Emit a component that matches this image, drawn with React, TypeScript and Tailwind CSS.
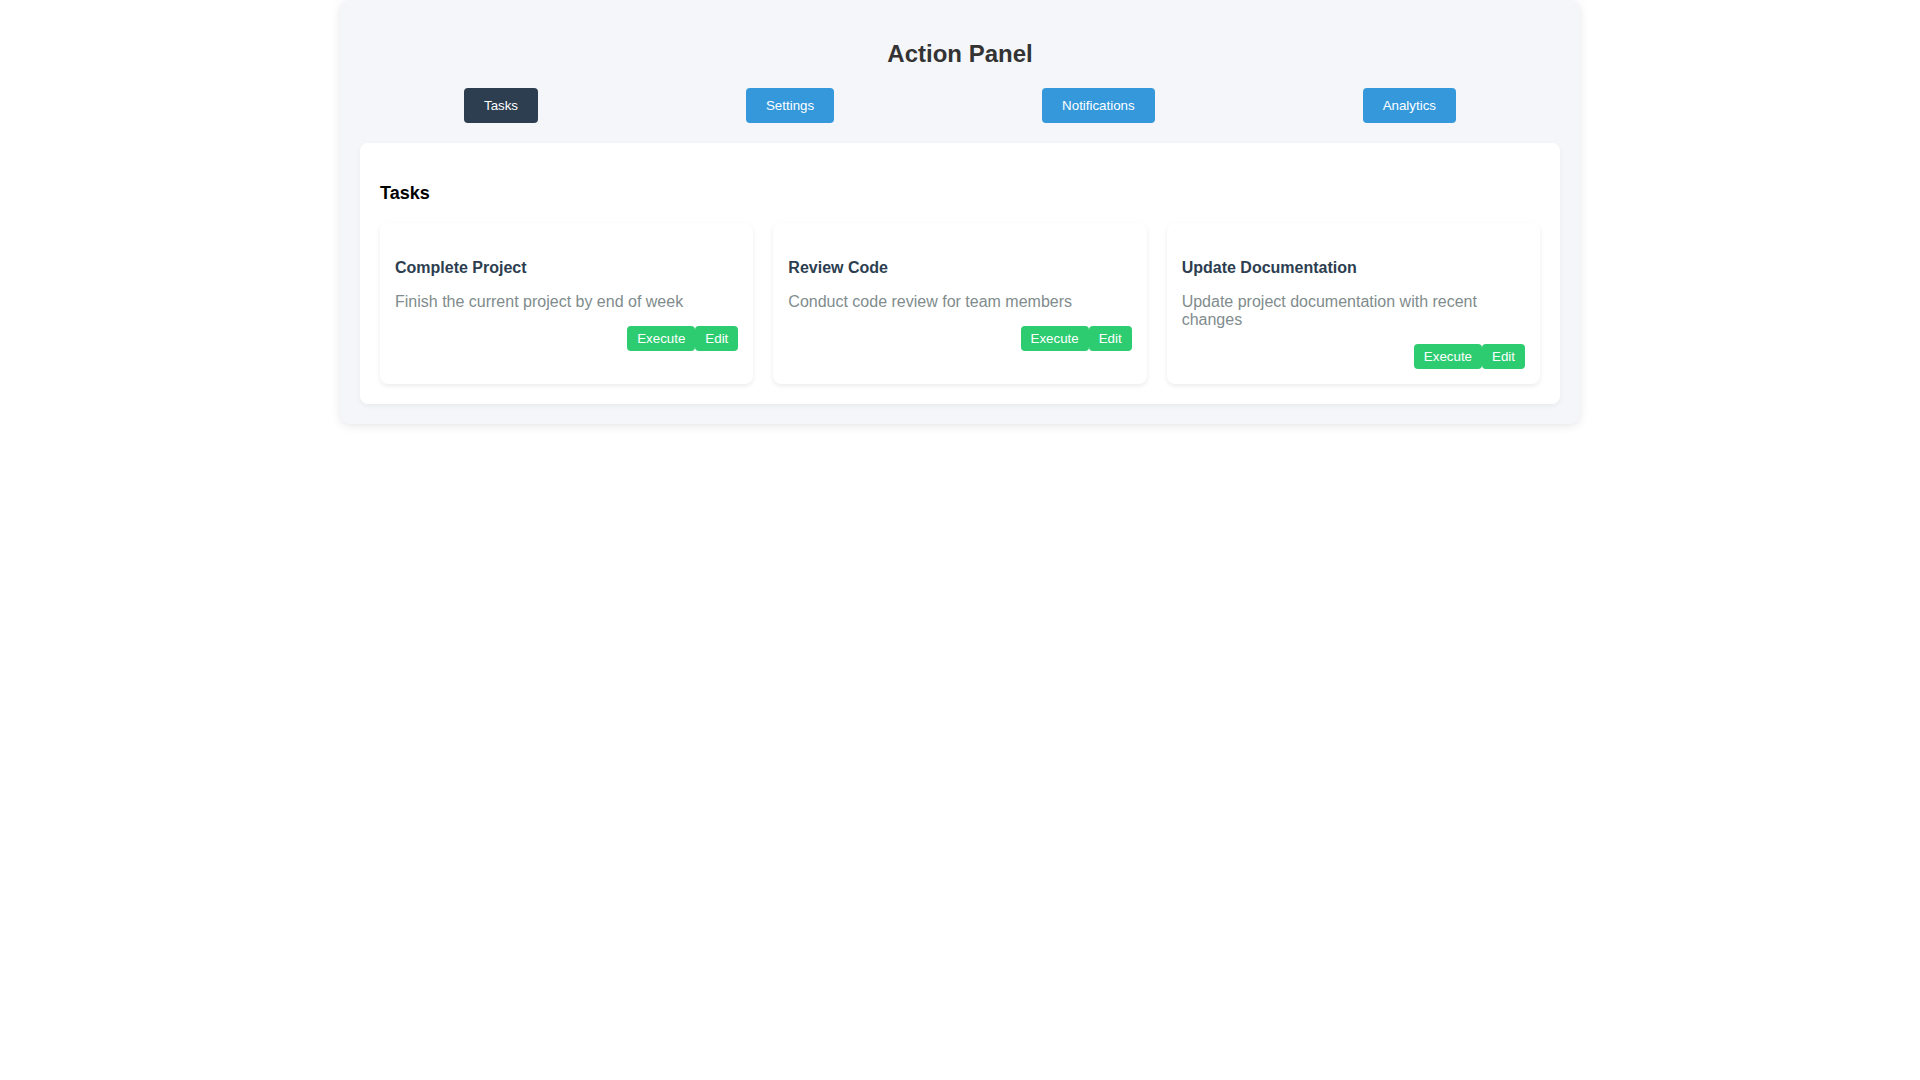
import { useState } from 'react';

interface Task {
  id: number;
  title: string;
  description: string;
}

const tasks: Task[] = [
  { id: 1, title: 'Complete Project', description: 'Finish the current project by end of week' },
  { id: 2, title: 'Review Code', description: 'Conduct code review for team members' },
  { id: 3, title: 'Update Documentation', description: 'Update project documentation with recent changes' },
];

const tabs = ['Tasks', 'Settings', 'Notifications', 'Analytics'];

function TaskCard({ task }: { task: Task }) {
  return (
    <div className="bg-white rounded-lg shadow-[0_2px_5px_rgba(0,0,0,0.08)] px-[15px] pt-[36px] pb-[15px]">
      <h3 className="text-[16px] leading-[normal] font-bold text-[#2c3e50] mb-[16px]">{task.title}</h3>
      <p className="text-[16px] leading-[normal] text-[#7f8c8d] mb-[15px]">{task.description}</p>
      <div className="flex justify-end">
        <button className="bg-[#2ecc71] text-white text-[13.333px] leading-[normal] px-[10px] py-[5px] rounded">
          Execute
        </button>
        <button className="bg-[#2ecc71] text-white text-[13.333px] leading-[normal] px-[10px] py-[5px] rounded">
          Edit
        </button>
      </div>
    </div>
  );
}

export default function App() {
  const [active, setActive] = useState('Tasks');

  return (
    <div className="min-h-screen bg-white font-['Liberation_Sans',Arial,sans-serif]">
      <div className="max-w-[1240px] mx-auto bg-[#f5f6fa] rounded-[10px] p-5 shadow-[0_2px_10px_rgba(0,0,0,0.1)]">
        <h1 className="mt-5 mb-5 text-center text-[24px] leading-[normal] font-bold text-[#333333]">Action Panel</h1>

        <div className="flex justify-around mb-5">
          {tabs.map(tab => (
            <button
              key={tab}
              onClick={() => setActive(tab)}
              className={
                active === tab
                  ? 'bg-[#2c3e50] text-white text-[13.333px] leading-[normal] px-5 py-2.5 rounded'
                  : 'bg-[#3498db] text-white text-[13.333px] leading-[normal] px-5 py-2.5 rounded'
              }
            >
              {tab}
            </button>
          ))}
        </div>

        <div className="bg-white rounded-lg p-5 shadow-[0_2px_5px_rgba(0,0,0,0.05)]">
          <h2 className="mt-5 mb-[19px] text-[18px] leading-[normal] font-bold text-black">{active}</h2>
          <div className="grid grid-cols-3 gap-5">
            {tasks.map(task => (
              <TaskCard key={task.id} task={task} />
            ))}
          </div>
        </div>
      </div>
    </div>
  );
}
